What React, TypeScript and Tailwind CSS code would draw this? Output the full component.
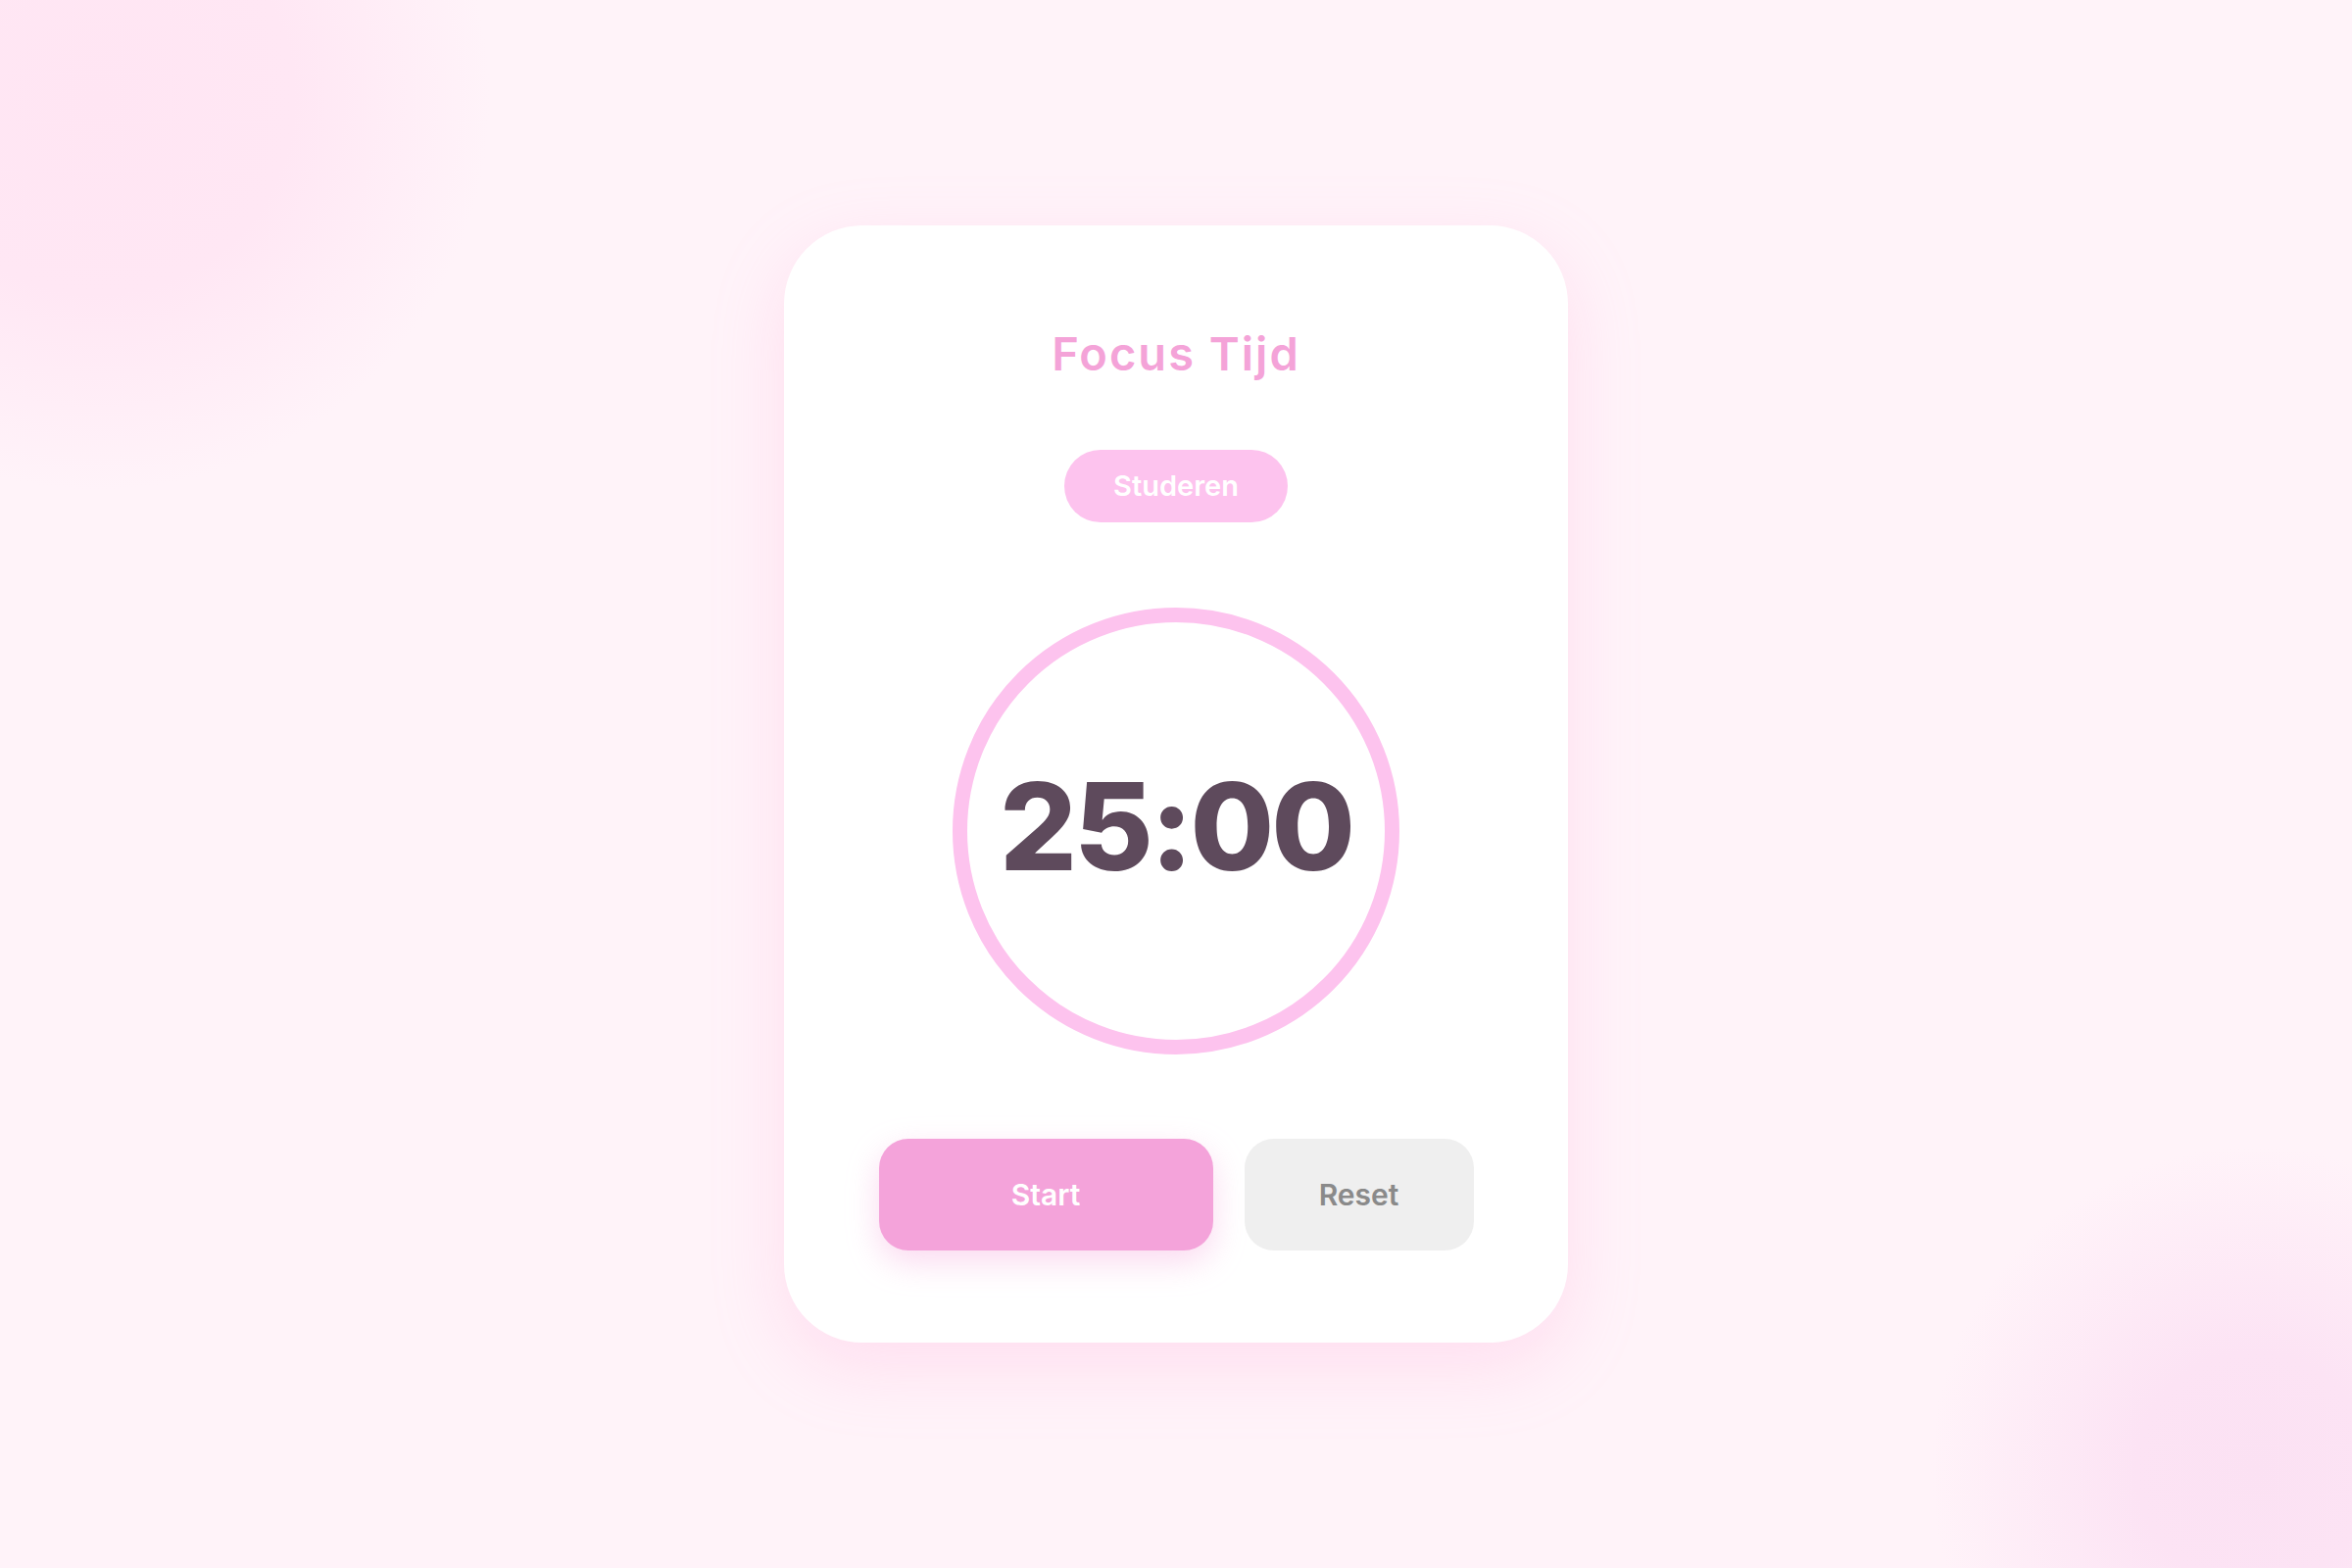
import { useState } from "react";

export default function App() {
  const [seconds] = useState(25 * 60);
  const mm = String(Math.floor(seconds / 60)).padStart(2, "0");
  const ss = String(seconds % 60).padStart(2, "0");

  return (
    <div
      className="relative flex h-[1600px] w-[2400px] items-center justify-center overflow-hidden bg-[#fff3f9] bg-[radial-gradient(circle_at_100px_100px,#ffe5f3_0px,#ffe7f4_200px,rgba(255,243,249,0)_400px),radial-gradient(circle_at_2300px_1500px,#fbe1f3_0px,#fce3f4_120px,rgba(255,243,249,0)_330px)]"
      style={{ fontFamily: "Inter, 'Noto Sans', sans-serif" }}
    >
      {/* Card */}
      <div className="flex h-[1140px] w-[800px] flex-col items-center rounded-[80px] bg-white pt-[107px] shadow-[0_24px_70px_rgba(255,170,215,0.28)]">
        <h1 className="text-[47px] font-semibold leading-none tracking-[2px] text-[#f4a3d8]">
          Focus Tijd
        </h1>

        <div className="mt-[75px] flex h-[74px] w-[228px] items-center justify-center rounded-full bg-[#fdc3ee] text-[29px] font-semibold text-white">
          Studeren
        </div>

        {/* Timer ring */}
        <div className="mt-[87px] flex h-[456px] w-[456px] items-center justify-center rounded-full border-[15px] border-[#fdc3ee]">
          <span className="mb-[10px] text-[124px] font-extrabold leading-none tracking-[-3px] text-[#5e4a5c]">
            {mm}:{ss}
          </span>
        </div>

        {/* Controls */}
        <div className="mt-[86px] flex gap-[32px]">
          <button className="flex h-[114px] w-[341px] items-center justify-center rounded-[30px] bg-[#f4a3da] text-[30px] font-semibold text-white shadow-[0_12px_32px_rgba(244,163,218,0.4)]">
            Start
          </button>
          <button className="flex h-[114px] w-[234px] items-center justify-center rounded-[30px] bg-[#efefef] text-[30px] font-semibold text-[#8a8a8a]">
            Reset
          </button>
        </div>
      </div>
    </div>
  );
}
